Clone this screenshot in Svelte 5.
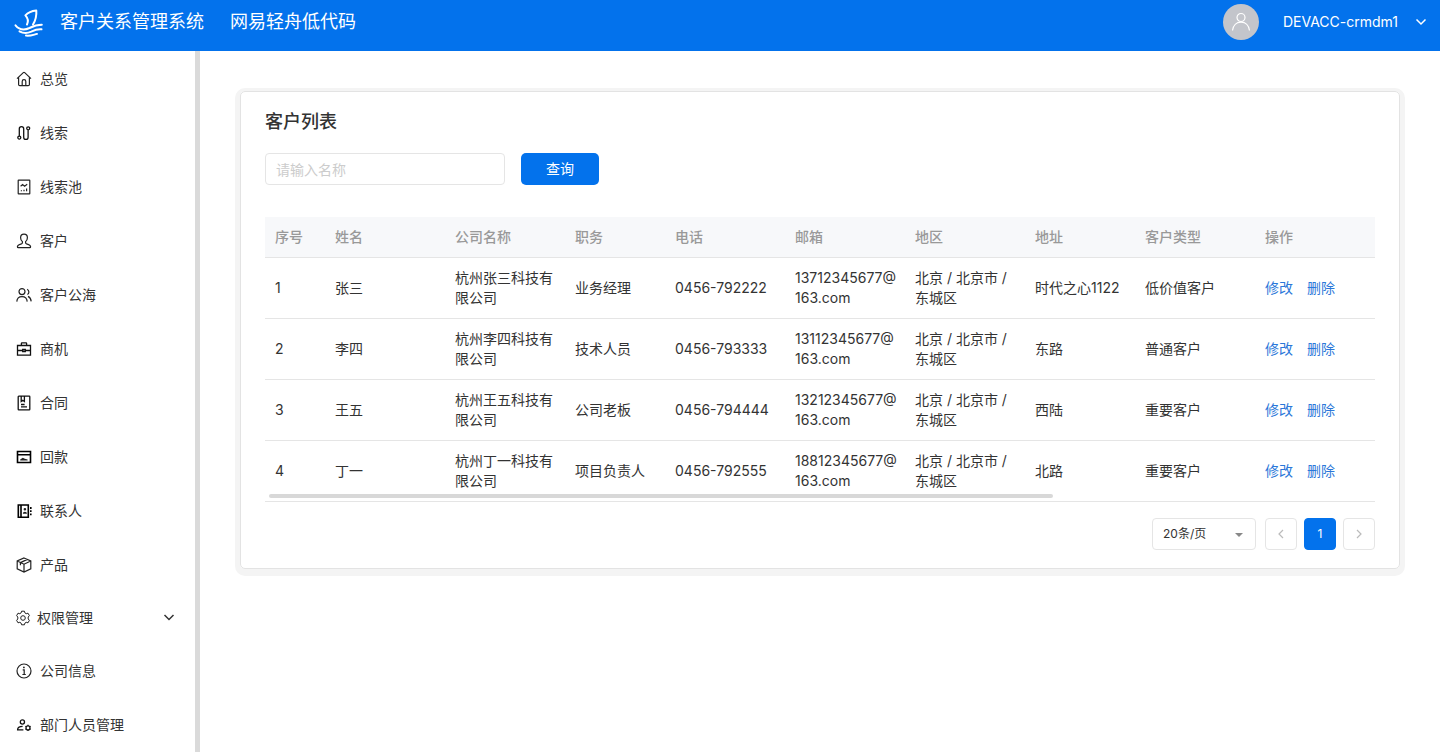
<script>
	// 16x16 outlines, `line` is stroked and `solid` is filled
	const icons = {
		home: {
			line: 'M1 7.6 7.3 1.6q.7-.6 1.4 0L15 7.6M2.6 6.4V13.4q0 1.2 1.2 1.2h8.4q1.2 0 1.2-1.2V6.4M6.2 14.4V10.4a1.8 1.8 0 0 1 3.6 0v4'
		},
		route: {
			line: 'M3.3 11V3.8a2.2 2.2 0 0 1 4.4 0v8.4a2.2 2.2 0 0 0 4.4 0V5M1.8 12.6a1.5 1.5 0 1 0 3 0 1.5 1.5 0 1 0-3 0M10.7 3.3a1.5 1.5 0 1 0 3 0 1.5 1.5 0 1 0-3 0',
			medium: true
		},
		report: {
			line: 'M2.6 1.2h10.8q.4 0 .4.4v12.8q0 .4-.4.4H2.6q-.4 0-.4-.4V1.6q0-.4.4-.4M4.6 7.2 6.6 5.6l2 1.6 2.6-2M5.4 12.2v-1M8 12.2v-1.4M10.6 12.2V9.6'
		},
		customer: {
			line: 'M8 1.2C5.8 1.2 4.6 2.7 4.6 4.7c0 1.6.7 3 1.8 3.9v1.2c0 .6-.4.9-1 1.1-2.4.7-4 1.2-4 2.8 0 .6.3.9.8.9h11.6c.5 0 .8-.3.8-.9 0-1.6-1.6-2.1-4-2.8-.6-.2-1-.5-1-1.1V8.6c1.1-.9 1.8-2.3 1.8-3.9 0-2-1.2-3.5-3.4-3.5'
		},
		people: {
			line: 'M3 4.6a3 3 0 1 0 6 0 3 3 0 1 0-6 0M.8 14.6C1 11.4 3 9.6 6 9.6s5 1.8 5.2 5M11.2 2.2c2.2 1.4 2.2 4 .2 5.4M12 9.4c1.8.8 2.9 2.4 3.2 5'
		},
		briefcase: {
			line: 'M1.5 4.5h13v9.7h-13zM5.4 4.4V2.4q0-.6.6-.6h4q.6 0 .6.6v2M1.4 9.5h5M9.6 9.5h5M6.7 8.5h2.6v2H6.7z',
			medium: true
		},
		contract: {
			line: 'M2.8 1.2h10.4q.6 0 .6.6v12.4q0 .6-.6.6H2.8q-.6 0-.6-.6V1.8q0-.6.6-.6M5.2 1.4v5l1.6-1.2 1.6 1.2v-5M5 9.5h3.6M5 11.9h6',
			medium: true
		},
		payment: {
			line: 'M1.5 2.5h13v11h-13zM1.5 5.8h13',
			solid: 'M4.2 11.4v-1l2.6-1.6 2 1 2.8.6v1z',
			bold: true
		},
		contacts: {
			line: 'M2.3 2h10v12.2h-10zM5 2v12M14.8 4v2M14.8 7.3v1.8M14.8 10.4v1.8',
			solid: 'M7.6 6.3a1.3 1.3 0 1 1 2.6 0 1.3 1.3 0 0 1-2.6 0M6.8 10.8q0-2 2.1-2t2.1 2z',
			bold: true
		},
		box: {
			line: 'M8 1 14.8 4v7.8L8 15 1.2 11.8V4zM1.2 4 8 7.2 14.8 4M8 7.2V15M4.4 5.6 11.4 2.4M4.4 5.6v2.6'
		},
		gear: {
			line: 'M6.6 1.2h2.8l.5 1.7 1.3.8 1.8-.5 1.4 2.5-1.2 1.3v2l1.2 1.3-1.4 2.5-1.8-.5-1.3.8-.5 1.7H6.6l-.5-1.7-1.3-.8-1.8.5-1.4-2.5L2.8 9V7L1.6 5.7 3 3.2l1.8.5 1.3-.8zM5.7 8a2.3 2.3 0 1 0 4.6 0 2.3 2.3 0 1 0-4.6 0',
			thin: true
		},
		info: {
			line: 'M1 8a7 7 0 1 0 14 0A7 7 0 1 0 1 8M6.7 6.8h1.5v4.6M6.4 11.5h3.4',
			solid: 'M7 4.4a.9.9 0 1 1 1.8 0 .9.9 0 0 1-1.8 0'
		},
		staff: {
			line: 'M4.3 5a2.1 2.1 0 1 0 4.2 0 2.1 2.1 0 1 0-4.2 0M7.4 12.8H1.6c0-2.2 1.7-3.4 5-3.4M12 7.8v1M12 13v1M9.3 9.4l.9.5M13.8 11.9l.9.5M9.3 12.4l.9-.5M13.8 9.9l.9-.5M10 10.9a2 2 0 1 0 4 0 2 2 0 1 0-4 0',
			medium: true
		}
	};

	const menu = [
		{ label: '总览', icon: 'home' },
		{ label: '线索', icon: 'route' },
		{ label: '线索池', icon: 'report' },
		{ label: '客户', icon: 'customer' },
		{ label: '客户公海', icon: 'people' },
		{ label: '商机', icon: 'briefcase' },
		{ label: '合同', icon: 'contract' },
		{ label: '回款', icon: 'payment' },
		{ label: '联系人', icon: 'contacts' },
		{ label: '产品', icon: 'box' },
		{ label: '权限管理', icon: 'gear', group: true },
		{ label: '公司信息', icon: 'info' },
		{ label: '部门人员管理', icon: 'staff' }
	];

	const columns = [
		{ title: '序号', width: 60 },
		{ title: '姓名', width: 120 },
		{ title: '公司名称', width: 120 },
		{ title: '职务', width: 100 },
		{ title: '电话', width: 120 },
		{ title: '邮箱', width: 120 },
		{ title: '地区', width: 120 },
		{ title: '地址', width: 110 },
		{ title: '客户类型', width: 120 },
		{ title: '操作', width: 120 }
	];

	const region = '北京 / 北京市 / 东城区';

	const customers = [
		{ name: '张三', company: '杭州张三科技有限公司', job: '业务经理', phone: '0456-792222', email: '13712345677@163.com', address: '时代之心1122', type: '低价值客户' },
		{ name: '李四', company: '杭州李四科技有限公司', job: '技术人员', phone: '0456-793333', email: '13112345677@163.com', address: '东路', type: '普通客户' },
		{ name: '王五', company: '杭州王五科技有限公司', job: '公司老板', phone: '0456-794444', email: '13212345677@163.com', address: '西陆', type: '重要客户' },
		{ name: '丁一', company: '杭州丁一科技有限公司', job: '项目负责人', phone: '0456-792555', email: '18812345677@163.com', address: '北路', type: '重要客户' }
	];

	let keyword = $state('');
	let applied = $state('');
	let open = $state(false);

	let rows = $derived(customers.filter((c) => c.name.includes(applied)));

	function search(e) {
		e.preventDefault();
		applied = keyword.trim();
	}
</script>

{#snippet icon(name)}
	<svg
		class="icon"
		class:bold={icons[name].bold}
		class:medium={icons[name].medium}
		class:thin={icons[name].thin}
		viewBox="0 0 16 16"
		aria-hidden="true"
	>
		<path d={icons[name].line} />
		{#if icons[name].solid}
			<path class="solid" d={icons[name].solid} />
		{/if}
	</svg>
{/snippet}

{#snippet chevron(d)}
	<svg class="chevron" viewBox="0 0 12 12" aria-hidden="true"><path {d} /></svg>
{/snippet}

<header class="topbar">
	<svg class="logo" viewBox="0 0 30 30" aria-hidden="true">
		<path d="M13 17.5c1.6-3.3 1-6.3-1.6-9.1C14 5.5 18 4 22.3 3.6c.4 5-.6 9.400-3.300 13.900" />
		<path d="M1.5 18.3c3.7 4.5 9 4.900 14 2.700 4-1.900 7.800-3.200 12.300-3.200" />
		<path d="M5.5 24.300c4.200 2.400 8 2 11.800.3 3.700-1.800 7-2.600 10.200-2.300" />
		<path d="M12 28.600c4.200.700 7.500-.9 11-1.700" />
	</svg>
	<h1>客户关系管理系统</h1>
	<span class="product">网易轻舟低代码</span>
	<button class="account" type="button">
		<span class="avatar">
			<svg viewBox="0 0 20 20" aria-hidden="true">
				<circle cx="10" cy="5.5" r="4" />
				<path d="M1.5 18.5c.6-5.2 4-8.4 8.5-8.4s7.9 3.2 8.5 8.4" />
			</svg>
		</span>
		<span>DEVACC-crmdm1</span>
		{@render chevron('M1.5 3.5 6 8 10.5 3.5')}
	</button>
</header>

<div class="layout">
	<nav class="sidebar">
		<ul>
			{#each menu as item}
				<li>
					{#if item.group}
						<button class="item group" type="button" aria-expanded={open} onclick={() => (open = !open)}>
							{@render icon(item.icon)}
							<span>{item.label}</span>
							{@render chevron('M1.5 3 6 7.5 10.5 3')}
						</button>
					{:else}
						<a class="item" href="#{item.icon}">
							{@render icon(item.icon)}
							<span>{item.label}</span>
						</a>
					{/if}
				</li>
			{/each}
		</ul>
	</nav>

	<main>
		<section class="card">
			<h2>客户列表</h2>

			<form class="filter" onsubmit={search}>
				<input type="text" placeholder="请输入名称" aria-label="名称" bind:value={keyword} />
				<button type="submit">查询</button>
			</form>

			<div class="table-wrap">
				<table>
					<colgroup>
						{#each columns as col}
							<col style:width="{col.width}px" />
						{/each}
					</colgroup>
					<thead>
						<tr>
							{#each columns as col}
								<th>{col.title}</th>
							{/each}
						</tr>
					</thead>
					<tbody>
						{#each rows as row, i}
							<tr>
								<td>{i + 1}</td>
								<td>{row.name}</td>
								<td>{row.company}</td>
								<td>{row.job}</td>
								<td>{row.phone}</td>
								<td>{row.email.split('@')[0]}@<wbr />{row.email.split('@')[1]}</td>
								<td>{region}</td>
								<td class="nowrap">{row.address}</td>
								<td>{row.type}</td>
								<td>
									<div class="actions">
										<a href="#edit">修改</a>
										<a href="#delete">删除</a>
									</div>
								</td>
							</tr>
						{/each}
					</tbody>
				</table>
				<div class="thumb"></div>
			</div>

			<div class="pager">
				<div class="size">
					<select aria-label="每页条数">
						<option>20条/页</option>
					</select>
					<svg viewBox="0 0 8 4" aria-hidden="true"><path d="M0 0h8L4 4z" /></svg>
				</div>
				<div class="pages">
					<button type="button" disabled aria-label="上一页">{@render chevron('M8 2 4 6 8 10')}</button>
					<button type="button" class="current">1</button>
					<button type="button" disabled aria-label="下一页">{@render chevron('M4 2 8 6 4 10')}</button>
				</div>
			</div>
		</section>
	</main>
</div>

<style>
	:global(body) {
		background: #fff;
		color: #333;
		font-family: Inter, 'Noto Sans CJK SC', sans-serif;
		font-size: 14px;
		line-height: 20px;
	}

	:global(#app) {
		display: flex;
		flex-direction: column;
		min-height: 100vh;
	}

	button,
	input,
	select {
		font: inherit;
		box-sizing: border-box;
	}

	button {
		cursor: pointer;
	}

	a {
		text-decoration: none;
	}

	/* Header */
	.topbar {
		display: flex;
		align-items: center;
		padding: 4px 13px 11px 14px;
		background: #0372ec;
		color: #fff;
	}

	.logo {
		width: 30px;
		height: 30px;
		fill: none;
		stroke: #fff;
		stroke-width: 2;
		stroke-linecap: round;
		stroke-linejoin: round;
	}

	h1,
	.product {
		margin: 0;
		font-size: 18px;
		line-height: 24px;
		font-weight: 400;
	}

	h1 {
		margin-left: 16px;
	}

	.product {
		margin-left: 26px;
	}

	.account {
		display: flex;
		align-items: center;
		margin-left: auto;
		padding: 0;
		border: 0;
		background: none;
		color: #fff;
	}

	.avatar {
		display: grid;
		place-items: center;
		width: 36px;
		height: 36px;
		margin-right: 24px;
		border-radius: 50%;
		background: #c3c5cb;
	}

	.avatar svg {
		width: 20px;
		height: 20px;
		fill: none;
		stroke: #fff;
		stroke-width: 1.2;
	}

	.chevron {
		width: 12px;
		height: 12px;
		fill: none;
		stroke: currentColor;
		stroke-width: 1.5;
	}

	.account .chevron {
		margin-left: 17px;
	}

	/* Sidebar */
	.layout {
		display: flex;
		flex: 1;
	}

	.sidebar {
		flex: none;
		box-sizing: border-box;
		width: 200px;
		padding-top: 1px;
		border-right: 5px solid #dadada;
	}

	.sidebar ul {
		margin: 0;
		padding: 0;
		list-style: none;
	}

	.item {
		display: flex;
		align-items: center;
		gap: 8px;
		height: 54px;
		padding: 0 16px;
		color: #333;
	}

	.group {
		gap: 6px;
		width: 100%;
		height: 52px;
		padding: 0 20px 0 15px;
		border: 0;
		background: none;
	}

	.group .chevron {
		margin-left: auto;
	}

	.icon {
		width: 16px;
		height: 16px;
		fill: none;
		stroke: #222;
		stroke-width: 1.2;
	}

	.icon.medium {
		stroke: #111;
		stroke-width: 1.3;
	}

	.icon.bold {
		stroke: #000;
		stroke-width: 1.6;
	}

	.icon.thin {
		stroke-width: 1;
	}

	.icon .solid {
		fill: #222;
		stroke: none;
	}

	/* Content */
	main {
		flex: 1;
		min-width: 0;
		padding: 40px;
	}

	.card {
		padding: 16px 24px 18px;
		border: 1px solid #e3e3e3;
		border-radius: 5px;
		box-shadow: 0 2px 0 5px #f4f4f4;
	}

	h2 {
		margin: 0 0 17px;
		font-size: 18px;
		line-height: 28px;
		font-weight: 500;
	}

	.filter {
		display: flex;
		gap: 16px;
		margin-bottom: 32px;
	}

	.filter input {
		width: 240px;
		height: 32px;
		padding: 0 10px;
		border: 1px solid #e5e5e5;
		border-radius: 4px;
		color: #333;
	}

	.filter input::placeholder {
		color: #ccc;
	}

	.filter button {
		width: 78px;
		height: 32px;
		padding: 0;
		border: 0;
		border-radius: 5px;
		background: #0372ec;
		color: #fff;
	}

	.table-wrap {
		position: relative;
	}

	table {
		width: 100%;
		table-layout: fixed;
		border-spacing: 0;
	}

	th,
	td {
		padding: 10px;
		border-bottom: 1px solid #e5e5e5;
		text-align: left;
	}

	th {
		background: #f7f8fa;
		color: #999;
		font-weight: 500;
	}

	td {
		height: 40px;
	}

	.nowrap {
		white-space: nowrap;
	}

	.actions {
		display: flex;
		gap: 14px;
	}

	.actions a {
		color: #2b77d9;
	}

	/* Horizontal scroll thumb, lies over the last row */
	.thumb {
		position: absolute;
		left: 4px;
		bottom: 4px;
		width: 784px;
		height: 4px;
		border-radius: 2px;
		background: #d8d8d8;
	}

	/* Pagination */
	.pager {
		display: flex;
		justify-content: flex-end;
		gap: 9px;
		margin-top: 16px;
		font-size: 12px;
	}

	.size {
		position: relative;
	}

	.size select {
		width: 104px;
		height: 32px;
		padding: 0 10px;
		border: 1px solid #e5e5e5;
		border-radius: 4px;
		background: #fff;
		color: #333;
		appearance: none;
	}

	.size svg {
		position: absolute;
		top: 15px;
		right: 13px;
		width: 8px;
		height: 4px;
		fill: #888;
		pointer-events: none;
	}

	.pages {
		display: flex;
		gap: 7px;
	}

	.pages button {
		display: grid;
		place-items: center;
		width: 32px;
		height: 32px;
		padding: 0;
		border: 1px solid #e5e5e5;
		border-radius: 4px;
		background: #fff;
		color: #bbb;
	}

	.pages .chevron {
		stroke-width: 1.2;
	}

	.pages .current {
		border-color: #0372ec;
		background: #0372ec;
		color: #fff;
	}
</style>
